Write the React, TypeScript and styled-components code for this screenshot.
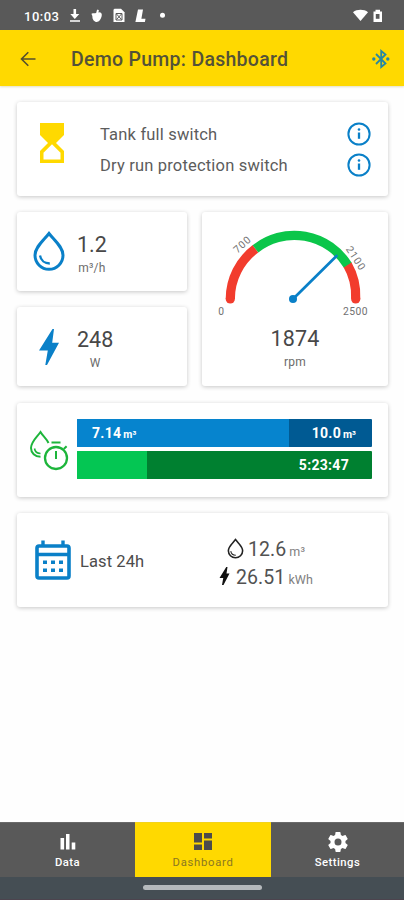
import React from "react";
import styled, { createGlobalStyle } from "styled-components";

const BLUE = "#0a80c8";
const YELLOW = "#ffd900";
const GREY = "#595959";

const GlobalStyle = createGlobalStyle`
  * { box-sizing: border-box; }
  body { margin: 0; background: #fff; font-family: Roboto, "Liberation Sans", sans-serif; color: #444; }
  svg { display: block; flex: none; }
`;

const Screen = styled.div`
  width: 404px;
  height: 900px;
  display: flex;
  flex-direction: column;
  background: #fefefe;
  overflow: hidden;
`;

const StatusBar = styled.div`
  height: 30px;
  flex: none;
  display: flex;
  align-items: center;
  padding: 2px 20px 0 24px;
  background: ${GREY};
  color: #fff;
`;

const Clock = styled.span`
  width: 46px;
  font-size: 13px;
  font-weight: 500;
  letter-spacing: 0.5px;
`;

const StatusIcons = styled.div`
  display: flex;
  align-items: center;
  flex: 1;
`;

const Header = styled.header`
  height: 56px;
  flex: none;
  display: flex;
  align-items: center;
  padding: 1px 14px 0 20px;
  background: ${YELLOW};
  box-shadow: 0 1px 2px rgba(150, 130, 0, 0.25);
`;

const Title = styled.h1`
  flex: 1;
  margin: 1px 0 0 35px;
  font-size: 19.5px;
  font-weight: 500;
  letter-spacing: 0.28px;
  color: #545238;
  white-space: nowrap;
`;

const Content = styled.main`
  flex: 1;
  display: flex;
  flex-direction: column;
  gap: 16px;
  padding: 16px 16px 0 17px;
`;

const Card = styled.section<{ $h: number; $pl?: number }>`
  height: ${(p) => p.$h}px;
  flex: none;
  display: flex;
  align-items: center;
  padding-left: ${(p) => p.$pl ?? 0}px;
  background: #fff;
  border-radius: 3px;
  box-shadow: 0 1px 4px rgba(0, 0, 0, 0.22);
`;

const HourglassBox = styled.div`
  padding-bottom: 13px;
`;

const Metrics = styled.div`
  display: grid;
  grid-template-columns: 170px 186px;
  column-gap: 15px;
  padding-bottom: 1px;
`;

const MetricColumn = styled.div`
  display: flex;
  flex-direction: column;
  gap: 16px;
`;

const Switches = styled.div`
  flex: 1;
  margin: 0 17px 0 36px;
`;

const SwitchRow = styled.div`
  height: 31px;
  display: flex;
  align-items: center;
  justify-content: space-between;
  font-size: 16.5px;
  letter-spacing: 0.18px;
  color: #5c5c5c;
`;

const SwitchLabel = styled.span`
  padding-top: 2px;
`;

const Reading = styled.div<{ $ml: number }>`
  display: flex;
  flex-direction: column;
  align-items: center;
  margin-left: ${(p) => p.$ml}px;
  padding-top: 6px;
`;

const Value = styled.div<{ $spacing?: number }>`
  font-size: 21.5px;
  line-height: 26px;
  letter-spacing: ${(p) => p.$spacing ?? 0}px;
  color: #484848;
`;

const Unit = styled.div`
  font-size: 12px;
  line-height: 20px;
  letter-spacing: 0.2px;
  color: #6c6c6c;
`;

const GaugeCard = styled(Card)`
  flex-direction: column;
`;

const Bars = styled.div`
  width: 295px;
  margin-left: 8px;
  display: flex;
  flex-direction: column;
  gap: 4px;
  padding-bottom: 2px;
`;

const Bar = styled.div<{ $track: string }>`
  height: 28px;
  display: flex;
  background: ${(p) => p.$track};
  border-radius: 1px;
  overflow: hidden;
  color: #fff;
  font-size: 14px;
  font-weight: 700;
  letter-spacing: 0.3px;
`;

const Fill = styled.div<{ $w: number; $c: string }>`
  width: ${(p) => p.$w}px;
  background: ${(p) => p.$c};
  display: flex;
  align-items: center;
  padding-left: 15px;
`;

const Total = styled.div<{ $pr: number }>`
  flex: 1;
  display: flex;
  align-items: center;
  justify-content: flex-end;
  padding-right: ${(p) => p.$pr}px;
`;

const BarUnit = styled.span`
  font-size: 10.5px;
  margin: 3px 0 0 2px;
  letter-spacing: 0;
`;

const Period = styled.div`
  width: 133px;
  margin-left: 9px;
  padding-top: 2px;
  font-size: 16.5px;
  letter-spacing: 0.1px;
  color: #4c4c4c;
`;

const Totals = styled.div`
  width: 106px;
  display: flex;
  flex-direction: column;
  align-items: center;
  padding-top: 7px;
`;

const TotalRow = styled.div<{ $gap: number }>`
  height: 28px;
  display: flex;
  align-items: center;
  font-size: 19.5px;
  letter-spacing: 0.1px;
  color: #525252;
  svg { margin: 0 ${(p) => p.$gap}px 3px 0; }
`;

const SmallUnit = styled.span`
  margin: 4px 0 0 3px;
  font-size: 12.5px;
  color: #808080;
`;

const Nav = styled.nav`
  height: 55px;
  flex: none;
  display: grid;
  grid-template-columns: 135px 136px 133px;
`;

const NavItem = styled.div<{ $active?: boolean }>`
  display: flex;
  flex-direction: column;
  align-items: center;
  padding-top: 8px;
  background: ${(p) => (p.$active ? YELLOW : GREY)};
  color: ${(p) => (p.$active ? "#4c4c4c" : "#fff")};
  border-top: 1px solid ${(p) => (p.$active ? "#f3d31b" : "#6a6a6a")};
`;

const NavLabel = styled.span<{ $active?: boolean }>`
  font-size: 11.3px;
  line-height: 16px;
  margin-top: 2px;
  font-weight: ${(p) => (p.$active ? 400 : 500)};
  letter-spacing: ${(p) => (p.$active ? 0.7 : 0.45)}px;
  color: ${(p) => (p.$active ? "#8a7720" : "#fff")};
`;

const GestureBar = styled.div`
  height: 23px;
  flex: none;
  display: flex;
  justify-content: center;
  align-items: center;
  padding-bottom: 1px;
  background: #454e54;
  border-bottom: 1px solid #4c444e;
`;

const GestureHandle = styled.div`
  width: 119px;
  height: 5px;
  border-radius: 3px;
  background: #b5b9bc;
`;

const InfoIcon = () => (
  <svg width="24" height="24" viewBox="0 0 24 24">
    <circle cx="12" cy="12" r="10.6" fill="none" stroke={BLUE} strokeWidth="2" />
    <path d="M12 10.5v6.3" stroke={BLUE} strokeWidth="2.3" />
    <circle cx="12" cy="7.5" r="1.3" fill={BLUE} />
  </svg>
);

const Hourglass = () => (
  <svg width="24" height="40" viewBox="0 0 24 40">
    <path d="M0 0h24v12l-8 8 8 8v12H0V28l8-8-8-8z" fill={YELLOW} />
    <path d="M3.500 36.500v-6.800L12 21.200l8.500 8.500v6.800z" fill="#fff" />
  </svg>
);

const Drop = () => (
  <svg width="32" height="42" viewBox="0 0 32 42">
    <path d="M16 2.5C10.5 9.5 2 16 2 24.3a14 14 0 0 0 28 0C30 16 21.5 9.5 16 2.5z" fill="none" stroke={BLUE} strokeWidth="3" />
    <path d="M7 24.5c.8 5 4.800 8 9.800 8" fill="none" stroke={BLUE} strokeWidth="2.300" />
  </svg>
);

const Bolt = () => (
  <svg width="20" height="36" viewBox="0 0 20 36">
    <path d="M13.500 0h1.500l-1.800 13.700H20L8 36H6.300l2.500-14.500H0z" fill={BLUE} />
  </svg>
);

const DropTimer = () => (
  <svg width="40" height="41" viewBox="0 0 40 41" fill="none" stroke="#1db53b" strokeWidth="2">
    <path d="M19.500 13C17.500 8.500 13.500 5.500 11.500 2 8 7 2 11.500 2 18c0 5 4 8.800 9.500 8.800" />
    <path d="M5.500 18.500c.5 3 3 5 6 5" strokeWidth="1.600" />
    <circle cx="27" cy="28" r="11" strokeWidth="2.300" />
    <path d="M22.500 12.500h9M27 21v8M34.800 19l2.800-2.800" />
  </svg>
);

const Calendar = () => (
  <svg width="36" height="40" viewBox="0 0 36 40">
    <rect x="2" y="6" width="32" height="32" rx="2" fill="none" stroke={BLUE} strokeWidth="3.600" />
    <path d="M8 .5V6M28 .5V6M2 14.500h32" stroke={BLUE} strokeWidth="3.400" fill="none" />
    <path d="M8 22.200h4M16 22.200h4M24 22.200h4M8 30.200h4M16 30.200h4M24 30.200h4" stroke={BLUE} strokeWidth="3.600" />
  </svg>
);

const Gauge = () => (
  <svg width="186" height="114" viewBox="0 0 186 114">
    <g fill="none" strokeWidth="9.200">
      <path d="M28.300 87A62.700 62.700 0 0 1 53.500 36.800" stroke="#f23c2d" />
      <path d="M145.300 52.400A62.700 62.700 0 0 1 153.700 87" stroke="#f23c2d" />
      <path d="M53.500 36.800A62.700 62.700 0 0 1 145.600 53" stroke="#0bc64a" />
    </g>
    <circle cx="28.300" cy="87" r="4.600" fill="#f23c2d" />
    <circle cx="153.700" cy="87" r="4.600" fill="#f23c2d" />
    <path d="M91 87l43.500-43" stroke={BLUE} strokeWidth="2.700" strokeLinecap="round" />
    <circle cx="91" cy="87" r="4" fill={BLUE} />
    <g fill="#707070" fontSize="10.300" letterSpacing="0.5" textAnchor="middle">
      <text x="19.300" y="102.500">0</text>
      <text x="153.500" y="102.500">2500</text>
      <text transform="translate(42.800 35) rotate(-43)" letterSpacing="0.9">700</text>
      <text transform="translate(151 48.300) rotate(57)" letterSpacing="1">2100</text>
    </g>
  </svg>
);

const BackArrow = () => (
  <svg width="16" height="16" viewBox="0 0 16 16" fill="none" stroke="#55502c" strokeWidth="1.600">
    <path d="M15.500 8H1.800M8.300 1.200L1.500 8l6.800 6.800" />
  </svg>
);

const Bluetooth = () => (
  <svg width="18" height="20" viewBox="0 0 18 20" fill="none" stroke="#2887a3" strokeWidth="1.800">
    <path d="M4 5l9.500 9.500L9.200 18V2l4.300 3.500L4 15" />
    <circle cx="1.800" cy="10" r=".8" fill="#2887a3" />
    <circle cx="15.800" cy="10" r=".8" fill="#2887a3" />
  </svg>
);

const StatusGlyphs = () => (
  <svg width="98" height="18" viewBox="0 0 98 18">
    <g fill="#fff">
      <path d="M3.500 2h2.600v5h3.200L4.800 12 .3 7h3.200zM0 13.200h10v1.600H0z" />
      <path d="M27.500 2.500c2 .2 1.500 2 .4 3 2.800-.8 4.400 1 3.800 3.500-.6 3-2.800 6-5 6s-4.500-2.500-4.300-5.500c.1-1.400-.8-1.300-.9-2.800 1.700-.7 3.400 0 4.500-.7.800-.6.100-2.200 1.500-3.500z" />
      <path d="M44.500 1.800h6.500l3.500 3.500v9.700h-11V2.800z" />
      <path d="M68 2.500h5l-1.600 9.200h4.100l-.6 3.300h-9.500z" />
      <circle cx="92.500" cy="8.300" r="2.500" />
    </g>
    <path d="M46 6.500h6v6.500h-6zM46.500 7l5 5.500M51.500 7l-5 5.500" fill="none" stroke={GREY} strokeWidth="1" />
  </svg>
);

const Signal = () => (
  <svg width="31" height="14" viewBox="0 0 31 14">
    <path d="M0 3.200C4 0 11 0 15 3.200L7.500 12z" fill="#fff" />
    <path d="M20.500 2.500h2V.8h4.500v1.700h2V13h-8.500z" fill="#fff" />
    <path d="M22.800 5h3.700v4.800h-3.700z" fill={GREY} />
  </svg>
);

const SmallDrop = () => (
  <svg width="17" height="21" viewBox="0 0 16 20" fill="none" stroke="#222">
    <path d="M8 1.500C5.500 5 1.200 8 1.200 12.200a6.800 6.600 0 0 0 13.600 0C14.800 8 10.500 5 8 1.500z" strokeWidth="1.500" />
    <path d="M3.500 12.500c.4 2.500 2.300 4 4.800 4" />
  </svg>
);

const SmallBolt = () => (
  <svg width="11" height="18" viewBox="0 0 20 36">
    <path d="M13.500 0H16l-2 13.200h6L8 36H5l2.500-14H0z" fill="#111" />
  </svg>
);

const DataIcon = () => (
  <svg width="20" height="20" viewBox="0 0 20 20" fill="currentColor">
    <path d="M2.500 6h3.600v11.500H2.500zM8 2h3.500v15.500H8zM13.700 10.500h3.600v7h-3.600z" />
  </svg>
);

const DashboardIcon = () => (
  <svg width="20" height="20" viewBox="0 0 20 20" fill="currentColor">
    <path d="M1 1h8v9.500H1zM11 1h8v5.500h-8zM1 12.500h8V18H1zM11 8.500h8V18h-8z" />
  </svg>
);

const GearIcon = () => (
  <svg width="24" height="24" viewBox="0 0 24 24" fill="currentColor">
    <path d="M19.430 12.980c.04-.32.07-.64.07-.98s-.03-.66-.07-.98l2.110-1.650c.19-.15.24-.42.12-.64l-2-3.460c-.12-.22-.39-.3-.61-.22l-2.490 1c-.52-.4-1.080-.73-1.690-.98l-.38-2.650A.49.49 0 0 0 14 2h-4c-.25 0-.46.18-.49.42l-.38 2.650c-.61.25-1.170.59-1.690.98l-2.490-1c-.23-.09-.49 0-.61.22l-2 3.460c-.13.22-.07.49.12.64l2.110 1.650c-.04.32-.07.65-.07.98s.03.66.07.98l-2.110 1.650c-.19.15-.24.42-.12.64l2 3.460c.12.22.39.3.61.22l2.490-1c.52.4 1.080.73 1.690.98l.38 2.650c.03.24.24.42.49.42h4c.25 0 .46-.18.49-.42l.38-2.650c.61-.25 1.170-.59 1.690-.98l2.490 1c.23.09.49 0 .61-.22l2-3.460c.12-.22.07-.49-.12-.64zM12 15.500a3.500 3.500 0 1 1 0-7 3.500 3.500 0 0 1 0 7z" />
  </svg>
);

const NavIconBox = styled.div`
  height: 22px;
  display: flex;
  align-items: center;
  justify-content: center;
`;

export default function App() {
  return (
    <>
      <GlobalStyle />
      <Screen>
        <StatusBar>
          <Clock>10:03</Clock>
          <StatusIcons><StatusGlyphs /></StatusIcons>
          <Signal />
        </StatusBar>
        <Header>
          <BackArrow />
          <Title>Demo Pump: Dashboard</Title>
          <Bluetooth />
        </Header>
        <Content>
          <Card $h={94} $pl={23}>
            <HourglassBox><Hourglass /></HourglassBox>
            <Switches>
              <SwitchRow><SwitchLabel>Tank full switch</SwitchLabel><InfoIcon /></SwitchRow>
              <SwitchRow><SwitchLabel>Dry run protection switch</SwitchLabel><InfoIcon /></SwitchRow>
            </Switches>
          </Card>
          <Metrics>
            <MetricColumn>
              <Card $h={79} $pl={16}>
                <Drop />
                <Reading $ml={12}>
                  <Value>1.2</Value>
                  <Unit>m³/h</Unit>
                </Reading>
              </Card>
              <Card $h={79} $pl={22}>
                <Bolt />
                <Reading $ml={18}>
                  <Value>248</Value>
                  <Unit>W</Unit>
                </Reading>
              </Card>
            </MetricColumn>
            <GaugeCard $h={174}>
              <Gauge />
              <Value $spacing={0.2}>1874</Value>
              <Unit>rpm</Unit>
            </GaugeCard>
          </Metrics>
          <Card $h={94} $pl={12}>
            <DropTimer />
            <Bars>
              <Bar $track="#005a93">
                <Fill $w={212} $c="#0684ce">7.14<BarUnit>m³</BarUnit></Fill>
                <Total $pr={16}>10.0<BarUnit>m³</BarUnit></Total>
              </Bar>
              <Bar $track="#008030">
                <Fill $w={70} $c="#04c653" />
                <Total $pr={23}>5:23:47</Total>
              </Bar>
            </Bars>
          </Card>
          <Card $h={94} $pl={18}>
            <Calendar />
            <Period>Last 24h</Period>
            <Totals>
              <TotalRow $gap={4}><SmallDrop />12.6<SmallUnit>m³</SmallUnit></TotalRow>
              <TotalRow $gap={6}><SmallBolt />26.51<SmallUnit>kWh</SmallUnit></TotalRow>
            </Totals>
          </Card>
        </Content>
        <Nav>
          <NavItem><NavIconBox><DataIcon /></NavIconBox><NavLabel>Data</NavLabel></NavItem>
          <NavItem $active><NavIconBox><DashboardIcon /></NavIconBox><NavLabel $active>Dashboard</NavLabel></NavItem>
          <NavItem><NavIconBox><GearIcon /></NavIconBox><NavLabel>Settings</NavLabel></NavItem>
        </Nav>
        <GestureBar><GestureHandle /></GestureBar>
      </Screen>
    </>
  );
}
